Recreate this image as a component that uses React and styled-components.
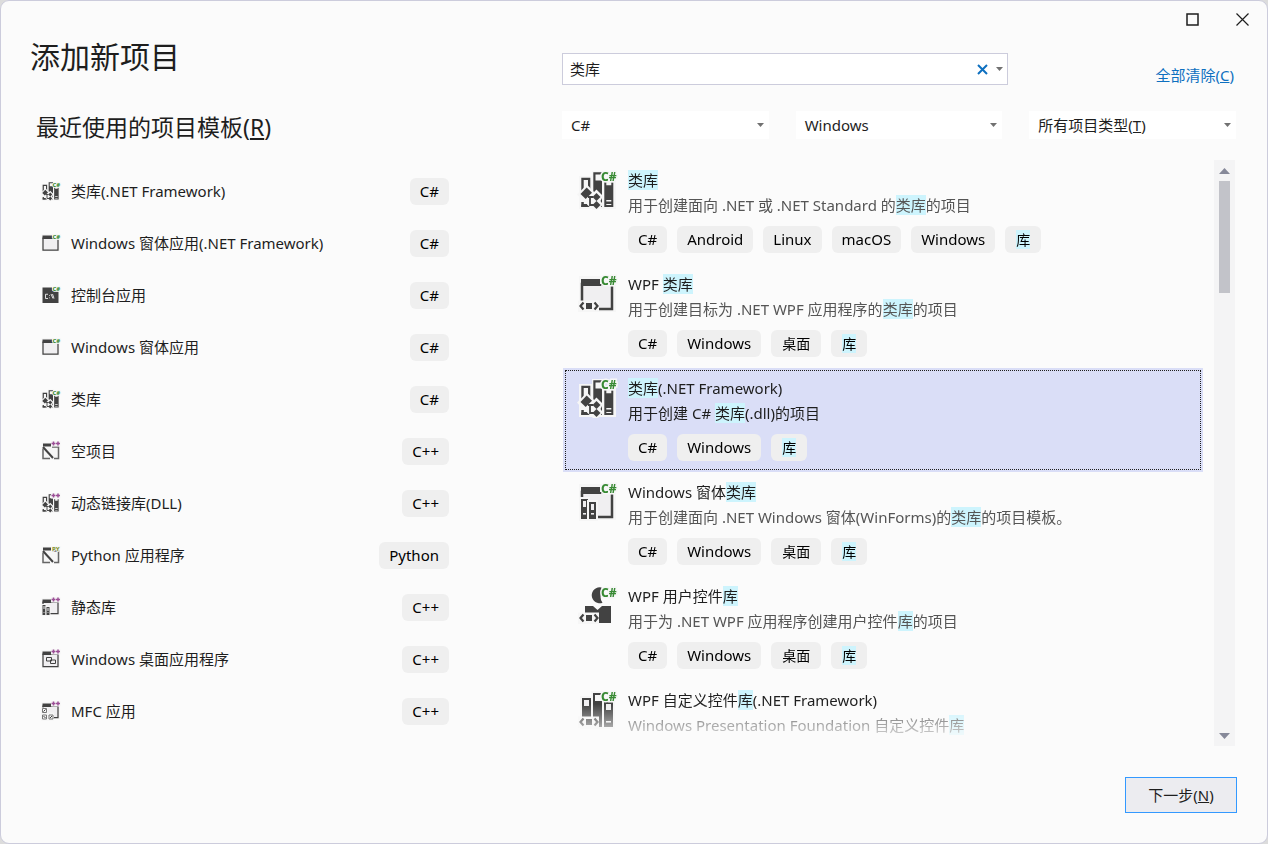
import React, { useRef, useState } from "react";
import styled, { createGlobalStyle } from "styled-components";

const GlobalStyle = createGlobalStyle`
  *, *::before, *::after {
    box-sizing: border-box;
  }

  body {
    margin: 0;
    background: #dcdcdc;
    color: #1e1e1e;
    font-family: "Noto Sans", "Noto Sans CJK SC", sans-serif;
    font-size: 15px;
    line-height: 25px;
  }

  button, input, select {
    font: inherit;
    color: inherit;
  }
`;

const Dialog = styled.main`
  position: relative;
  display: flex;
  flex-direction: column;
  height: 100vh;
  min-height: 480px;
  padding: 37px 31px 30px 29px;
  background: #fbfbfb;
  border: 1px solid #ccccdc;
  border-radius: 9px;
`;

const WindowControls = styled.div`
  position: absolute;
  top: 0;
  right: 0;
  display: flex;
`;

const WindowButton = styled.button`
  display: flex;
  align-items: center;
  justify-content: center;
  width: 50px;
  height: 36px;
  padding: 0;
  border: none;
  background: none;
`;

const Columns = styled.div`
  flex: 1;
  min-height: 0;
  display: grid;
  grid-template-columns: 419px minmax(0, 1fr);
  grid-template-rows: minmax(0, 1fr);
  column-gap: 113px;
`;

const RecentColumn = styled.section`
  display: flex;
  flex-direction: column;
`;

const Title = styled.h1`
  margin: 0 0 35px;
  font-size: 30px;
  font-weight: 400;
  line-height: 38px;
`;

const Subtitle = styled.h2`
  margin: 0 0 22px;
  padding-left: 6px;
  font-size: 23px;
  font-weight: 400;
  line-height: 32px;
`;

const PlainList = styled.ul`
  margin: 0;
  padding: 0;
  list-style: none;
`;

const RecentRow = styled.button`
  display: flex;
  align-items: center;
  gap: 10px;
  width: 100%;
  height: 52px;
  padding: 0 0 0 11px;
  border: none;
  background: none;
  text-align: left;
`;

const RecentName = styled.span`
  flex: 1;
`;

const Tag = styled.span`
  display: inline-block;
  height: 27px;
  padding: 0 ${(props) => (props.$chinese ? 11 : 10)}px;
  border-radius: 6px;
  background: #efefef;
  color: #000;
  font-size: ${(props) => (props.$chinese ? 14 : 15)}px;
  line-height: 27px;
`;

const SearchColumn = styled.section`
  display: flex;
  flex-direction: column;
  min-height: 0;
  padding-top: 15px;
`;

const SearchRow = styled.div`
  display: flex;
  height: 32px;
  margin-bottom: 26px;
`;

const SearchBox = styled.div`
  flex: 1;
  display: flex;
  align-items: center;
  padding: 0 0 0 7px;
  background: #fff;
  border: 1px solid #ccccdc;
`;

const SearchInput = styled.input`
  flex: 1;
  min-width: 0;
  padding: 0;
  border: none;
  outline: none;
  background: none;
`;

const IconButton = styled.button`
  display: flex;
  align-items: center;
  justify-content: center;
  width: ${(props) => props.$width}px;
  height: 28px;
  padding: 0;
  border: none;
  background: none;
`;

const ClearCell = styled.div`
  flex: 0 0 228px;
  padding: 10px 2px 0 0;
  text-align: right;
`;

const ClearLink = styled.a`
  color: #0e70c0;
  text-decoration: none;
`;

const Filters = styled.div`
  display: grid;
  grid-template-columns: repeat(3, minmax(0, 1fr));
  gap: 27px;
  margin-bottom: 21px;
`;

const Filter = styled.label`
  display: grid;
  align-items: center;
  height: 28px;
  background: #fff;

  > * {
    grid-area: 1 / 1;
  }
`;

const FilterSelect = styled.select`
  width: 100%;
  height: 28px;
  border: none;
  appearance: none;
  background: none;
  color: transparent;

  option {
    color: #1e1e1e;
  }
`;

const FilterFace = styled.span`
  display: flex;
  align-items: center;
  justify-content: space-between;
  padding: 0 5px 0 9px;
  pointer-events: none;
`;

const Results = styled.div`
  flex: 1;
  min-height: 0;
  display: flex;
  gap: 11px;
  padding: 0 1px;
`;

const TemplateList = styled(PlainList)`
  flex: 1;
  overflow-y: auto;
  scrollbar-width: none;
  mask-image: linear-gradient(to bottom, #000 calc(100% - 42px), transparent);
`;

const IconSvg = styled.svg`
  flex: none;
  display: block;
  overflow: visible;
`;

const TemplateRow = styled.button`
  display: flex;
  align-items: flex-start;
  gap: 10px;
  width: 100%;
  height: 104px;
  padding: 8px 15px;
  border: none;
  background: ${(props) => (props.$selected ? "#dadef7" : "none")};
  outline: ${(props) => (props.$selected ? "1px dotted #1e1e1e" : "none")};
  outline-offset: -3px;
  text-align: left;

  > ${IconSvg} {
    margin-top: 2px;
  }
`;

const TemplateText = styled.span`
  display: flex;
  flex-direction: column;
  min-width: 0;
  white-space: nowrap;
`;

const TemplateDescription = styled.span`
  color: ${(props) => (props.$selected ? "#1e1e1e" : "#555")};
`;

const Tags = styled.span`
  display: flex;
  gap: 10px;
  margin-top: 8px;
`;

const Mark = styled.mark`
  background: #cdf4fd;
  color: inherit;
`;

const ScrollBar = styled.div`
  display: flex;
  flex-direction: column;
  align-items: center;
  width: 21px;
  background: #f4f4f5;
`;

const ScrollTrack = styled.div`
  flex: 1;
  width: 11px;
`;

const ScrollThumb = styled.div`
  height: 112px;
  background: #c2c3c9;
`;

const ScrollButton = styled.button`
  display: flex;
  align-items: center;
  justify-content: center;
  width: 21px;
  height: 21px;
  padding: 0;
  border: none;
  background: none;
`;

const Footer = styled.footer`
  display: flex;
  justify-content: flex-end;
  margin-top: 31px;
`;

const NextButton = styled.button`
  width: 112px;
  height: 36px;
  margin-right: -1px;
  padding: 0;
  border: 1px solid #3399ff;
  background: #ececf0;
`;

const languageMarks = {
  "C#": { color: "#388a34", text: "C#", x: 23 },
  "++": { color: "#9b4f96", text: "++", x: 20 },
  PY: { color: "#879636", text: "PY", x: 22 },
};

const INK = "#424242";
const HALO = "#f6f6f6";

// A book standing upright, with a label window near its top
function Book({ x, y, width = 9, bottom = 37 }) {
  return (
    <g>
      <rect x={x - 2} y={y - 2} width={width + 4} height={bottom - y + 4} fill={HALO} />
      <rect x={x} y={y} width={width} height={bottom - y} fill={INK} />
      <rect x={x + 2} y={y + 2} width={width - 4} height="6" fill="#f0eff1" />
      <path d={`M${x + 2} ${bottom - 6}h${width - 4}v1.6h-${width - 4}z`} fill="#f0eff1" />
    </g>
  );
}

function WindowFrame({ bottom = 35, left = 3 }) {
  return (
    <g>
      <path d={`M1 2h37v${bottom}H1z`} fill={HALO} />
      <path d={`M5 12h30v${bottom - 14}H5z`} fill="#f0eff1" />
      <path d={`M${left} 5h20v7H${left}z`} fill={INK} />
      <path d={`M${left + 1} 10h${33 - left}V${bottom - 1}H${left + 1}z`} fill="none" stroke={INK} strokeWidth="2.5" />
      <path d="M22 2h17v8H22z" fill={HALO} />
    </g>
  );
}

function CodeBrackets() {
  return (
    <g>
      <path d="M0 26.5h21V38H0z" fill={HALO} />
      <path d="M5.5 28.5L2.5 32l3 3.5M16.5 28.5l3 3.5-3 3.5" fill="none" stroke={INK} strokeWidth="2.2" />
      <path d="M8 29h6v6H8z" fill={INK} />
    </g>
  );
}

const drawings = {
  library: (
    <g>
      <path d="M1 6h13V1h12v9h12v29H1z" fill={HALO} />
      <path d="M3.3 7.7h9V37h-9zM5.7 10v11H10V10z" fill={INK} fillRule="evenodd" />
      <path d="M15.3 2.3H24V37h-8.7zM17.5 4.5v6H24v-6z" fill={INK} fillRule="evenodd" />
      <path d="M26.3 12.3h2v3h5v-3h2V37h-9zM28.3 30v1.5h5V30zM28.3 34v1h5v-1z" fill={INK} fillRule="evenodd" />
      <path d="M9 14.5l7 7.5 2.5-2.5L25 26l-2.5 5 2.500 3.500-5 5.500h-5l-6-5.500H2V28l-3-3.500z" fill={HALO} />
      <path d="M8.7 17.5l5.300 5.300-6.300 6.200-5.200-5z" fill={INK} />
      <path d="M18.500 23l4 4-4 4-4-4zM18.500 31l4 4-4 4-4-4z" fill={INK} />
      <path d="M10 27h5M12 27v8h4" fill="none" stroke={INK} strokeWidth="1.8" />
      <path d="M3.3 32h2.500v2H9v3H3.3z" fill={INK} />
    </g>
  ),
  wpfLibrary: (
    <g>
      <WindowFrame bottom={36} />
      <CodeBrackets />
    </g>
  ),
  form: <WindowFrame bottom={35} />,
  formsLibrary: (
    <g>
      <WindowFrame bottom={36} />
      <Book x={3} y={17} width={7} />
      <Book x={11} y={20} width={7} />
    </g>
  ),
  userControl: (
    <g>
      <path d="M23.5 1.5a8 8 0 1 0 1 15.3A9.500 9.500 0 0 1 22.500 11z" fill={INK} />
      <path d="M7 20h8l4.500 4 4.500-4h9v17H21V27H7z" fill={INK} />
      <CodeBrackets />
    </g>
  ),
  customControl: (
    <g>
      <Book x={4} y={8} />
      <path d="M13 1h12v38H13z" fill={HALO} />
      <path d="M15 3h9v34h-9zM17 5v6h7V5z" fill={INK} fillRule="evenodd" />
      <Book x={26} y={12} />
      <CodeBrackets />
    </g>
  ),
  console: (
    <g>
      <path d="M3 5h19v6h13v25H3z" fill={INK} />
      <path d="M14 18.5H9V27h5M17 20v1.5M17 25v1.5M20 18l4 9M23 18l3 9" fill="none" stroke="#f0eff1" strokeWidth="1.8" />
    </g>
  ),
  empty: (
    <g>
      <path d="M1 3h37v34H1z" fill={HALO} />
      <path d="M4 5h16v6H4z" fill={INK} />
      <path d="M4 15v20h14M26 35h9V12H22" fill="none" stroke="#666" strokeWidth="3" />
      <path d="M4 12l20 22" stroke={INK} strokeWidth="4" />
    </g>
  ),
  staticLibrary: (
    <g>
      <WindowFrame bottom={34} />
      <Book x={3} y={16} width={6} bottom={36} />
      <Book x={11} y={20} width={6} bottom={36} />
    </g>
  ),
  desktop: (
    <g>
      <WindowFrame bottom={36} />
      <path d="M11 17h10v7H11zM19 22h10v7H19z" fill="#f0eff1" stroke={INK} strokeWidth="2" />
    </g>
  ),
  mfc: (
    <g>
      <WindowFrame bottom={34} />
      <path d="M0 13h14v10h12v16H0z" fill={HALO} />
      <path d="M3 15h8v8H3zM3 28h8v8H3zM16 28h8v8h-8z" fill="none" stroke="#777" strokeWidth="2" />
      <path d="M5 21l4-4M5 30l4 4M18 34l4-4" stroke={INK} strokeWidth="2" />
    </g>
  ),
};

function TemplateIcon({ name, mark, size }) {
  const { color, text, x } = languageMarks[mark];
  return (
    <IconSvg width={size} height={size} viewBox="0 0 40 40" aria-hidden="true">
      {drawings[name]}
      {mark === "++" ? (
        <g>
          <path d="M20 0h19v11H20z" fill={HALO} />
          <path d="M25 1v8M21 5h8M34 1v8M30 5h8" stroke={color} strokeWidth="3" />
        </g>
      ) : (
        <text
          x={x}
          y="11"
          fill={color}
          stroke={HALO}
          strokeWidth="3"
          paintOrder="stroke"
          fontFamily="Noto Sans, sans-serif"
          fontSize="12"
          fontWeight="800"
        >
          {text}
        </text>
      )}
    </IconSvg>
  );
}

function Arrow({ up = false, width = 7, color = "#717171" }) {
  const half = width / 2;
  const height = Math.ceil(half);
  const points = up
    ? `0,${height} ${half},0 ${width},${height}`
    : `0,0 ${width},0 ${half},${height}`;
  return (
    <IconSvg width={width} height={height} aria-hidden="true">
      <polygon points={points} fill={color} />
    </IconSvg>
  );
}

const recentTemplates = [
  { name: "类库(.NET Framework)", tag: "C#", icon: "library", mark: "C#" },
  { name: "Windows 窗体应用(.NET Framework)", tag: "C#", icon: "form", mark: "C#" },
  { name: "控制台应用", tag: "C#", icon: "console", mark: "C#" },
  { name: "Windows 窗体应用", tag: "C#", icon: "form", mark: "C#" },
  { name: "类库", tag: "C#", icon: "library", mark: "C#" },
  { name: "空项目", tag: "C++", icon: "empty", mark: "++" },
  { name: "动态链接库(DLL)", tag: "C++", icon: "library", mark: "++" },
  { name: "Python 应用程序", tag: "Python", icon: "empty", mark: "PY" },
  { name: "静态库", tag: "C++", icon: "staticLibrary", mark: "++" },
  { name: "Windows 桌面应用程序", tag: "C++", icon: "desktop", mark: "++" },
  { name: "MFC 应用", tag: "C++", icon: "mfc", mark: "++" },
];

const templates = [
  {
    name: "类库",
    description: "用于创建面向 .NET 或 .NET Standard 的类库的项目",
    tags: ["C#", "Android", "Linux", "macOS", "Windows", "库"],
    icon: "library",
  },
  {
    name: "WPF 类库",
    description: "用于创建目标为 .NET WPF 应用程序的类库的项目",
    tags: ["C#", "Windows", "桌面", "库"],
    icon: "wpfLibrary",
  },
  {
    name: "类库(.NET Framework)",
    description: "用于创建 C# 类库(.dll)的项目",
    tags: ["C#", "Windows", "库"],
    icon: "library",
  },
  {
    name: "Windows 窗体类库",
    description: "用于创建面向 .NET Windows 窗体(WinForms)的类库的项目模板。",
    tags: ["C#", "Windows", "桌面", "库"],
    icon: "formsLibrary",
  },
  {
    name: "WPF 用户控件库",
    description: "用于为 .NET WPF 应用程序创建用户控件库的项目",
    tags: ["C#", "Windows", "桌面", "库"],
    icon: "userControl",
  },
  {
    name: "WPF 自定义控件库(.NET Framework)",
    description: "Windows Presentation Foundation 自定义控件库",
    tags: [],
    icon: "customControl",
  },
];

const filters = [
  { id: "language", label: "C#" },
  { id: "platform", label: "Windows" },
  { id: "type", label: "所有项目类型", accessKey: "T" },
];

function Highlight({ text }) {
  return text
    .split(/(类库|库)/)
    .map((part, i) => (i % 2 === 1 ? <Mark key={i}>{part}</Mark> : part));
}

function App() {
  const [query, setQuery] = useState("类库");
  const [selected, setSelected] = useState(2);
  const listRef = useRef(null);

  const scroll = (amount) => {
    listRef.current.scrollBy({ top: amount });
  };

  return (
    <Dialog>
      <GlobalStyle />
      <WindowControls>
        <WindowButton aria-label="最大化">
          <svg width="13" height="13" fill="none" stroke="#1e1e1e" strokeWidth="1.5">
            <rect x="1" y="1" width="11" height="11" />
          </svg>
        </WindowButton>
        <WindowButton aria-label="关闭">
          <svg width="13" height="13" stroke="#1e1e1e" strokeWidth="1.2">
            <path d="M0.5 0.5l12 12M12.5 0.5l-12 12" />
          </svg>
        </WindowButton>
      </WindowControls>

      <Columns>
        <RecentColumn>
          <Title>添加新项目</Title>
          <Subtitle>
            最近使用的项目模板(<u>R</u>)
          </Subtitle>
          <PlainList>
            {recentTemplates.map((template) => (
              <li key={template.name}>
                <RecentRow>
                  <TemplateIcon name={template.icon} mark={template.mark} size={20} />
                  <RecentName>{template.name}</RecentName>
                  <Tag>{template.tag}</Tag>
                </RecentRow>
              </li>
            ))}
          </PlainList>
        </RecentColumn>

        <SearchColumn>
          <SearchRow>
            <SearchBox>
              <SearchInput
                aria-label="搜索模板"
                value={query}
                onChange={(e) => setQuery(e.target.value)}
              />
              <IconButton $width={20} aria-label="清除" onClick={() => setQuery("")}>
                <svg width="11" height="11" stroke="#0e70c0" strokeWidth="2">
                  <path d="M1 1l9 9M10 1l-9 9" />
                </svg>
              </IconButton>
              <IconButton $width={15} aria-label="搜索历史">
                <Arrow />
              </IconButton>
            </SearchBox>
            <ClearCell>
              <ClearLink href="#clear">
                全部清除(<u>C</u>)
              </ClearLink>
            </ClearCell>
          </SearchRow>

          <Filters>
            {filters.map((filter) => (
              <Filter key={filter.id} htmlFor={filter.id}>
                <FilterSelect id={filter.id}>
                  <option>{filter.label}</option>
                </FilterSelect>
                <FilterFace>
                  <span>
                    {filter.label}
                    {filter.accessKey && (
                      <>
                        (<u>{filter.accessKey}</u>)
                      </>
                    )}
                  </span>
                  <Arrow />
                </FilterFace>
              </Filter>
            ))}
          </Filters>

          <Results>
            <TemplateList ref={listRef}>
              {templates.map((template, i) => (
                <li key={template.name}>
                  <TemplateRow $selected={selected === i} onClick={() => setSelected(i)}>
                    <TemplateIcon name={template.icon} mark="C#" size={40} />
                    <TemplateText>
                      <span>
                        <Highlight text={template.name} />
                      </span>
                      <TemplateDescription $selected={selected === i}>
                        <Highlight text={template.description} />
                      </TemplateDescription>
                      <Tags>
                        {template.tags.map((tag) => (
                          <Tag key={tag} $chinese={/[\u4e00-\u9fff]/.test(tag)}>
                            <Highlight text={tag} />
                          </Tag>
                        ))}
                      </Tags>
                    </TemplateText>
                  </TemplateRow>
                </li>
              ))}
            </TemplateList>
            <ScrollBar>
              <ScrollButton aria-label="向上滚动" onClick={() => scroll(-104)}>
                <Arrow up width={11} color="#868999" />
              </ScrollButton>
              <ScrollTrack>
                <ScrollThumb />
              </ScrollTrack>
              <ScrollButton aria-label="向下滚动" onClick={() => scroll(104)}>
                <Arrow width={11} color="#868999" />
              </ScrollButton>
            </ScrollBar>
          </Results>
        </SearchColumn>
      </Columns>

      <Footer>
        <NextButton>
          下一步(<u>N</u>)
        </NextButton>
      </Footer>
    </Dialog>
  );
}

export default App;
